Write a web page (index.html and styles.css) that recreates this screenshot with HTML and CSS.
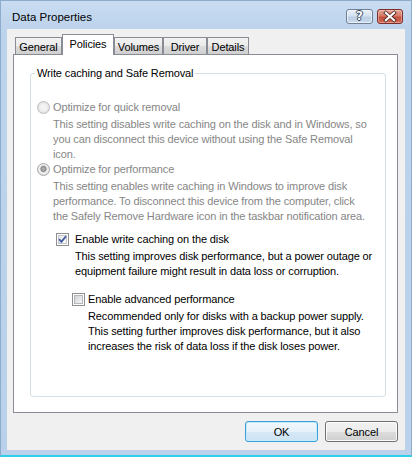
FILE: index.html
```html
<!DOCTYPE html>
<html>
<head>
<meta charset="utf-8">
<title>Data Properties</title>
<link rel="stylesheet" href="styles.css">
</head>
<body>
<div class="window">
  <div class="titlebar">
    <span class="title">Data Properties</span>
    <div class="caption-btns">
      <div class="cbtn help"><span class="qmark">?</span></div>
      <div class="cbtn close">
        <svg width="26" height="15" viewBox="0 0 26 15">
          <path d="M8.5 3.5 L17.5 11.5 M17.5 3.5 L8.5 11.5" stroke="#4a2320" stroke-width="4" stroke-linecap="square" fill="none"/>
          <path d="M8.5 3.5 L17.5 11.5 M17.5 3.5 L8.5 11.5" stroke="#ffffff" stroke-width="2.2" stroke-linecap="square" fill="none"/>
        </svg>
      </div>
    </div>
  </div>
  <div class="client">
    <div class="tabstrip">
      <div class="tab tab-general">General</div>
      <div class="tab tab-policies selected">Policies</div>
      <div class="tab tab-volumes">Volumes</div>
      <div class="tab tab-driver">Driver</div>
      <div class="tab tab-details">Details</div>
    </div>
    <div class="panel">
      <fieldset class="group">
        <legend>Write caching and Safe Removal</legend>
        <div class="options">
          <div class="opt disabled">
            <div class="row"><span class="radio"></span><span class="label radio-label">Optimize for quick removal</span></div>
            <p class="desc desc-radio">This setting disables write caching on the disk and in Windows, so<br>you can disconnect this device without using the Safe Removal<br>icon.</p>
          </div>
          <div class="opt disabled">
            <div class="row"><span class="radio on"></span><span class="label radio-label">Optimize for performance</span></div>
            <p class="desc desc-radio">This setting enables write caching in Windows to improve disk<br>performance. To disconnect this device from the computer, click<br>the Safely Remove Hardware icon in the taskbar notification area.</p>
          </div>
          <div class="opt check-1">
            <div class="row"><span class="check checked"><svg width="9" height="9" viewBox="0 0 9 9"><path d="M1.2 4.2 L3.4 6.8 L8 1.2" stroke="#3d5a9c" stroke-width="1.8" fill="none"/></svg></span><span class="label check-label-1">Enable write caching on the disk</span></div>
            <p class="desc desc-check-1">This setting improves disk performance, but a power outage or<br>equipment failure might result in data loss or corruption.</p>
          </div>
          <div class="opt check-2">
            <div class="row"><span class="check"></span><span class="label check-label-2">Enable advanced performance</span></div>
            <p class="desc desc-check-2">Recommended only for disks with a backup power supply.<br>This setting further improves disk performance, but it also<br>increases the risk of data loss if the disk loses power.</p>
          </div>
        </div>
      </fieldset>
    </div>
    <div class="buttons">
      <div class="btn default">OK</div>
      <div class="btn">Cancel</div>
    </div>
  </div>
</div>
</body>
</html>
```
FILE: styles.css
```css
* { box-sizing: border-box; }
html, body { margin: 0; padding: 0; }
body {
  width: 412px;
  height: 457px;
  overflow: hidden;
  background: #ffffff;
  font-family: "Liberation Sans", Arial, sans-serif;
  font-size: 11px;
  letter-spacing: -0.12px;
  color: #000000;
}
.window {
  width: 412px;
  height: 457px;
  display: flex;
  flex-direction: column;
  border: 1px solid #8fabcc;
  border-bottom: 2px solid #2cd0ea;
  padding-bottom: 5px;
  background: linear-gradient(#c9dcf1, #bcd3ec 28px, #b9d1ea);
}
.titlebar {
  height: 28px;
  flex: none;
  display: flex;
  align-items: center;
  justify-content: space-between;
  padding: 3px 8px 0 11px;
}
.title { font-size: 11.5px; letter-spacing: 0; }
.caption-btns { display: flex; gap: 4px; margin-top: -1px; }
.cbtn {
  width: 27px;
  height: 15px;
  border-radius: 3px;
  display: flex;
  align-items: center;
  justify-content: center;
}
.cbtn.help {
  border: 1px solid #6f7f95;
  background: linear-gradient(#e9f0f8, #d4e2f1 45%, #bccfe5 55%, #c9daec);
  box-shadow: inset 0 0 0 1px rgba(255,255,255,0.6);
}
.qmark {
  font-family: "DejaVu Sans", sans-serif;
  font-weight: bold;
  font-size: 12px;
  line-height: 13px;
  color: #ffffff;
  text-shadow: 1px 0 0 #34475f, -1px 0 0 #34475f, 0 1px 0 #34475f, 0 -1px 0 #34475f;
}
.cbtn.close {
  width: 26px;
  border: 1px solid #7b2e2a;
  background: linear-gradient(#e7a797, #d47968 45%, #c2503e 55%, #cf6a55);
  box-shadow: inset 0 0 0 1px rgba(255,220,210,0.45);
}
.cbtn.close svg { display: block; }

.client {
  flex: none;
  height: 421px;
  margin: 0 6px;
  background: #f0f0f0;
  display: flex;
  flex-direction: column;
  padding: 5px 7px 0 6px;
}
.tabstrip {
  height: 20px;
  flex: none;
  display: flex;
  align-items: flex-end;
  padding-left: 2px;
}
.tab {
  height: 17px;
  border: 1px solid #898c95;
  border-bottom: none;
  background: linear-gradient(#f2f2f2, #ebebeb 50%, #dddddd 50%, #cfcfcf);
  display: flex;
  align-items: center;
  justify-content: center;
  padding-top: 1px;
}
.tab.selected {
  height: 21px;
  margin-bottom: -1px;
  background: #ffffff;
  position: relative;
  z-index: 1;
  padding-top: 0;
  padding-bottom: 3px;
}
.tab-general { width: 47px; }
.tab-policies { width: 52px; }
.tab-volumes { width: 49px; }
.tab-driver { width: 44px; }
.tab-details { width: 42px; }

.panel {
  height: 359px;
  flex: none;
  border: 1px solid #898c95;
  background: #ffffff;
  padding: 11px 11px 15px 16px;
  display: flex;
  flex-direction: column;
}
.group {
  flex: 1;
  margin: 0;
  min-width: 0;
  border: 1px solid #d5dfe5;
  border-radius: 3px;
  padding: 0 6px;
}
.group legend {
  margin-left: -2px;
  padding: 0 2px;
  line-height: 15px;
}
.options { padding-top: 19px; }
.row {
  display: flex;
  align-items: center;
  height: 15px;
  line-height: 15px;
  white-space: nowrap;
}
.desc {
  margin: 2px 0 0 0;
  line-height: 15px;
  white-space: nowrap;
}
.disabled { color: #868686; }
.radio {
  width: 13px;
  height: 13px;
  flex: none;
  border-radius: 50%;
  border: 1px solid #bcbcbc;
  background: radial-gradient(circle at 50% 50%, #f4f4f4 0, #f1f1f1 3px, #e2e2e2 5.5px);
}
.radio.on {
  border-color: #a8a8a8;
  background: radial-gradient(circle at 50% 45%, #b9b9b9 0, #8e8e8e 2.6px, #d6d6d6 3.4px, #f3f3f3 4.2px, #e2e2e2 5.5px);
}
.radio-label { margin-left: 3px; }
.desc-radio { padding-left: 16px; }
.check-1 { margin-top: 8px; }
.check-2 { margin-top: 13px; }
.check {
  width: 13px;
  height: 13px;
  flex: none;
  border: 1px solid #8e8f8f;
  background: #ffffff;
  padding: 1px;
  display: flex;
}
.check::before {
  content: "";
  flex: 1;
  border: 1px solid #b3b7bc;
  background: linear-gradient(135deg, #cfd2d6, #f7f7f7);
}
.check.checked { position: relative; }
.check.checked::before {
  border-color: #c3c7cc;
  background: linear-gradient(135deg, #e4e6e9, #fbfbfb);
}
.check.checked svg {
  position: absolute;
  left: 1px;
  top: 1px;
}
.check-1 .row { padding-left: 19px; }
.check-label-1 { margin-left: 6px; }
.desc-check-1 { padding-left: 38px; }
.check-2 .row { padding-left: 35px; }
.check-label-2 { margin-left: 3px; }
.desc-check-2 { padding-left: 51px; }

.buttons {
  display: flex;
  justify-content: flex-end;
  gap: 7px;
  margin-top: 8px;
}
.btn {
  width: 73px;
  height: 21px;
  border: 1px solid #707070;
  border-radius: 3px;
  background: linear-gradient(#f2f2f2, #ebebeb 50%, #dddddd 50%, #cfcfcf);
  box-shadow: inset 0 0 0 1px #fbfbfb;
  display: flex;
  align-items: center;
  justify-content: center;
}
.btn.default {
  border-color: #3c9fd9;
  background: linear-gradient(#f3f9fd, #e6f1fa 50%, #d6e8f6 50%, #cde3f5);
  box-shadow: inset 0 0 0 1px #c5ecfb;
}
```
